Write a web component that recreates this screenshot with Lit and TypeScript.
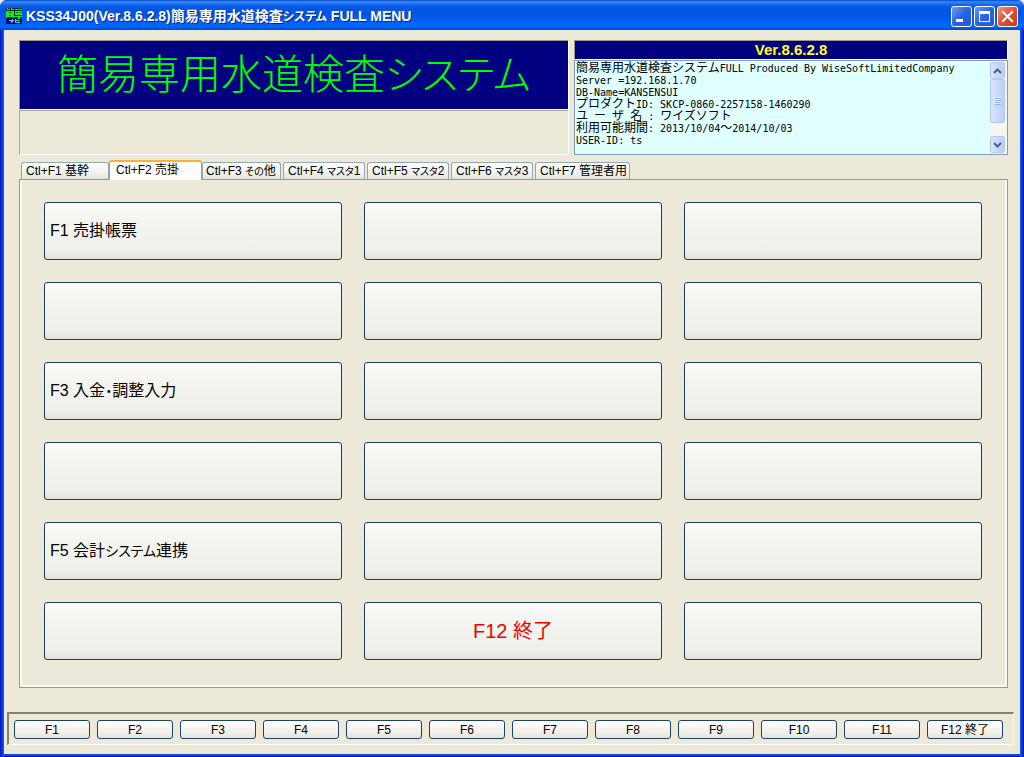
import { LitElement, html, css, svg } from "lit";
import { customElement, state } from "lit/decorators.js";
import { classMap } from "lit/directives/class-map.js";

interface MenuItem {
  label: string;
  exit?: boolean;
}

const TABS = [
  "Ctl+F1 基幹",
  "Ctl+F2 売掛",
  "Ctl+F3 その他",
  "Ctl+F4 マスタ1",
  "Ctl+F5 マスタ2",
  "Ctl+F6 マスタ3",
  "Ctl+F7 管理者用",
];

const MENU: MenuItem[] = Array.from({ length: 18 }, () => ({ label: "" }));
MENU[0] = { label: "F1 売掛帳票" };
MENU[6] = { label: "F3 入金・調整入力" };
MENU[12] = { label: "F5 会計システム連携" };
MENU[16] = { label: "F12 終了", exit: true };

const INFO = [
  "簡易専用水道検査システムFULL Produced By WiseSoftLimitedCompany",
  "Server =192.168.1.70",
  "DB-Name=KANSENSUI",
  "プロダクトID: SKCP-0860-2257158-1460290",
  "ユ ー ザ 名 : ワイズソフト",
  "利用可能期間: 2013/10/04～2014/10/03",
  "USER-ID: ts",
];

const FKEYS = ["F1", "F2", "F3", "F4", "F5", "F6", "F7", "F8", "F9", "F10", "F11", "F12 終了"];

// Kana are set a little smaller than the kanji around them.
const withKana = (text: string) =>
  (text.match(/[\u3041-\u30ff]+|[^\u3041-\u30ff]+/g) ?? []).map((run) =>
    /[\u3041-\u30ff]/.test(run) ? html`<span class="kana">${run}</span>` : run
  );

@customElement("xp-titlebar")
export class XpTitlebar extends LitElement {
  static styles = css`
    :host {
      display: flex;
      align-items: center;
      gap: 4px;
      height: 30px;
      box-sizing: border-box;
      padding: 2px 6px 0;
      border-radius: 7px 7px 0 0;
      background: linear-gradient(
        #0048c8 0,
        #3a8cf4 2px,
        #1a6cf0 4px,
        #0458e4 7px,
        #0054e3 13px,
        #005cf4 20px,
        #0068fe 26px,
        #005cf0 28px,
        #0048d0 30px
      );
    }
    .icon {
      width: 16px;
      height: 16px;
      flex: none;
    }
    h1 {
      flex: 1;
      margin: 0;
      font: bold 14px/20px "Liberation Sans", "Noto Sans CJK JP", sans-serif;
      font-feature-settings: "palt";
      color: #fff;
      text-shadow: 1px 1px 0 #0a2a80;
      white-space: nowrap;
    }
    .kana {
      font-size: 12px;
    }
    .controls {
      display: flex;
      gap: 2px;
    }
    button {
      width: 21px;
      height: 21px;
      padding: 0;
      border: 1px solid #fff;
      border-radius: 3px;
      background: linear-gradient(135deg, #6b9cf8, #2a62e0 50%, #2458d8);
    }
    .close {
      background: linear-gradient(135deg, #f0987c, #e0502a 50%, #c83c14);
    }
    svg {
      display: block;
    }
  `;

  render() {
    return html`
      <svg class="icon" viewBox="0 0 16 16" shape-rendering="crispEdges" aria-hidden="true">
        <rect width="16" height="16" fill="#003018" />
        <rect y="10" width="16" height="6" fill="#000c60" />
        <path d="M1 0h1v1h2v1h1V0h1v1h2v1H1zM0 3h8v7H7V9H1v1H0zM9 1h7v1H9zM9 3h7v4H9zM8 8h8v1h-2v2h-2V9H8z" fill="#18e828" />
        <path d="M3 4h2v1H3zM3 7h2v1H3zM10 4h2v1h-2zM13 4h2v1h-2zM12 0h1v3h-1z" fill="#087018" />
        <path d="M3 12h3v-1h1v1h1v1H7v1H6v1H5v-2H3zM9 11h1v1h3v1h-3v1h4v1H9zM13 10h1v1h-1z" fill="#30d8f0" />
      </svg>
      <h1>${withKana("KSS34J00(Ver.8.6.2.8)簡易専用水道検査システム FULL MENU")}</h1>
      <div class="controls">
        <button aria-label="最小化">
          <svg width="19" height="19"><rect x="4" y="12" width="7" height="3" fill="#fff" /></svg>
        </button>
        <button aria-label="最大化">
          <svg width="19" height="19">
            <path d="M4 4h11v11H4zM5 7v7h9V7z" fill="#fff" fill-rule="evenodd" />
          </svg>
        </button>
        <button class="close" aria-label="閉じる">
          <svg width="19" height="19">
            <path d="M5 5l9 9M14 5l-9 9" stroke="#fff" stroke-width="2" stroke-linecap="square" />
          </svg>
        </button>
      </div>
    `;
  }
}

@customElement("info-pane")
export class InfoPane extends LitElement {
  static styles = css`
    :host {
      display: flex;
      box-sizing: border-box;
      border: 1px solid #7f9db9;
      background: #e0ffff;
      min-width: 0;
    }
    .lines {
      flex: 1;
      min-width: 0;
      overflow: hidden;
      padding: 2px 1px;
      color: #000;
    }
    p {
      margin: 0;
      height: 12px;
      font: 10px/12px "DejaVu Sans Mono", "Noto Sans CJK JP", monospace;
      white-space: pre;
    }
    .wide {
      font: 12px/0 "Liberation Mono", "Noto Sans CJK JP", monospace;
    }
    .scroll {
      width: 16px;
      display: flex;
      flex-direction: column;
      padding: 1px 1px 1px 0;
      background: #f6f5ee;
    }
    .scroll button {
      width: 15px;
      height: 17px;
      padding: 0;
      border: 1px solid #b4c8f4;
      border-radius: 2px;
      background: linear-gradient(90deg, #d8e4fe, #bccdf8);
    }
    .scroll .thumb {
      height: 44px;
      display: grid;
      place-items: center;
    }
    .track {
      flex: 1;
    }
    svg {
      display: block;
      margin: auto;
    }
  `;

  private line(text: string) {
    const runs = text.match(/[\x20-\x7e]+|[^\x20-\x7e]+/g) ?? [];
    return html`<p>${runs.map((r) => (r.charCodeAt(0) < 127 ? r : html`<span class="wide">${r}</span>`))}</p>`;
  }

  render() {
    return html`
      <div class="lines" tabindex="0" role="document" aria-label="システム情報">${INFO.map((l) => this.line(l))}</div>
      <div class="scroll">
        <button aria-label="上へ">
          <svg width="9" height="6"><path d="M1 5l3.500-3.500L8 5" fill="none" stroke="#4d6185" stroke-width="2" /></svg>
        </button>
        <button class="thumb" aria-label="スクロール">
          <svg width="7" height="8" shape-rendering="crispEdges">
            ${[0, 2, 4, 6].map((y) => svg`<rect y=${y} width="7" height="1" fill="#eef4fe" />
              <rect x="1" y=${y + 1} width="6" height="1" fill="#8cb0f8" />`)}
          </svg>
        </button>
        <div class="track"></div>
        <button aria-label="下へ">
          <svg width="9" height="6"><path d="M1 1l3.500 3.500L8 1" fill="none" stroke="#4d6185" stroke-width="2" /></svg>
        </button>
      </div>
    `;
  }
}

@customElement("app-root")
export class AppRoot extends LitElement {
  @state() private active = 1;

  static styles = css`
    :host {
      display: block;
      background: #e4ecf8;
      font-family: "Liberation Sans", "Noto Sans CJK JP", sans-serif;
      font-feature-settings: "palt";
      color: #000;
    }
    .window {
      display: flex;
      flex-direction: column;
      min-height: 100vh;
      box-sizing: border-box;
      border-radius: 7px 7px 0 0;
      background: #0831d9;
    }
    .frame {
      flex: 1;
      display: flex;
      padding: 0 4px 4px;
      background: linear-gradient(90deg, #0019c8 0, #0831d9 2px, #1668f4 4px, #1668f4 calc(100% - 4px), #0831d9 calc(100% - 2px), #0019a0 100%);
    }
    .client {
      flex: 1;
      min-width: 0;
      display: flex;
      flex-direction: column;
      background: #ece9d8;
      padding: 10px 0 9px;
      box-shadow: 0 2px 0 #1048d8, 0 4px 0 #0019a0;
    }
    .body {
      flex: 1;
      display: flex;
      flex-direction: column;
      padding: 0 12px 0 15px;
    }
    .header {
      display: grid;
      grid-template-columns: 550fr 434fr;
      gap: 5px;
    }
    .brand,
    .status {
      display: flex;
      flex-direction: column;
      min-width: 0;
    }
    .banner {
      height: 70px;
      box-sizing: border-box;
      margin: 0;
      padding-left: 37px;
      border: 1px solid;
      border-color: #9d9a8c #fff #fff #9d9a8c;
      background: #000080;
      color: #00ff00;
      font-size: 41px;
      line-height: 68px;
      font-weight: 300;
      white-space: nowrap;
    }
    .banner .kana {
      font-size: 40px;
    }
    .message {
      height: 45px;
      box-sizing: border-box;
      border: 1px solid;
      border-color: #aca899 #fff #fff #aca899;
    }
    .version {
      height: 20px;
      box-sizing: border-box;
      border: 1px solid;
      border-color: #9d9a8c #fff #fff #9d9a8c;
      background: #000080;
      color: #ffff20;
      font-size: 15px;
      line-height: 18px;
      font-weight: bold;
      text-align: center;
    }
    info-pane {
      height: 95px;
    }
    .tabs {
      display: flex;
      align-items: flex-end;
      height: 19px;
      margin-top: 5px;
      padding-left: 2px;
    }
    .tab {
      height: 17px;
      box-sizing: border-box;
      margin: 0 2px 0 0;
      padding: 0 4px;
      width: 82px;
      border: 1px solid #91a7b4;
      border-bottom: 0;
      border-radius: 3px 3px 0 0;
      background: linear-gradient(#fff, #f0f0ea 70%, #e2e2dc);
      font: 12px/16px "Liberation Sans", "Noto Sans CJK JP", sans-serif;
      font-feature-settings: "palt";
      text-align: left;
      white-space: nowrap;
      color: #000;
    }
    .tab .kana {
      font-size: 10px;
    }
    .tab:nth-child(1) {
      width: 88px;
      margin-right: 0;
    }
    .tab:nth-child(2) {
      width: 93px;
      margin-right: 0;
    }
    .tab:nth-child(3) {
      width: 79px;
      padding: 0 3px;
    }
    .tab:nth-child(7) {
      width: 95px;
    }
    .tab.active {
      z-index: 1;
      height: 20px;
      margin-bottom: -1px;
      padding: 0 6px 2px;
      border-top: 2px solid #f8b038;
      background: #fdfdfb;
    }
    .panel {
      flex: 1;
      display: grid;
      grid-template-columns: repeat(3, 1fr);
      grid-auto-rows: 58px;
      align-content: start;
      gap: 22px;
      padding: 22px 25px 27px 24px;
      border: 1px solid #919b9c;
      box-shadow: inset 2px 0 0 #f8f7f0, inset -2px -2px 0 #fbfaf4;
    }
    .item {
      min-width: 0;
      padding: 0 5px;
      border: 1px solid #1c4058;
      border-radius: 3px;
      background: linear-gradient(#fdfdfc, #f4f4f0 30%, #f0f0ea 85%, #dfe2dc);
      font: 16px/20px "Liberation Sans", "Noto Sans CJK JP", sans-serif;
      font-feature-settings: "palt";
      text-align: left;
      color: #000;
    }
    .item .kana {
      font-size: 14px;
    }
    .item.exit {
      font-size: 20px;
      text-align: center;
      color: #f00000;
    }
    .keys {
      display: grid;
      grid-template-columns: repeat(12, 1fr);
      gap: 7px;
      margin: 24px 6px 0 3px;
      padding: 6px 10px 5px 5px;
      border: 1px solid;
      border-width: 2px 1px 1px 2px;
      border-color: #858272 #fff #fff #858272;
    }
    .key {
      min-width: 0;
      height: 19px;
      padding: 0;
      border: 1px solid #1c4068;
      border-radius: 3px;
      background: linear-gradient(#fff, #f2f1ea 60%, #e4e4dc);
      font: 12px/16px "Liberation Sans", "Noto Sans CJK JP", sans-serif;
      color: #000;
      white-space: nowrap;
    }
  `;

  render() {
    return html`
      <div class="window">
        <xp-titlebar></xp-titlebar>
        <div class="frame">
          <main class="client">
            <div class="body">
              <header class="header">
                <div class="brand">
                  <h2 class="banner">${withKana("簡易専用水道検査システム")}</h2>
                  <div class="message"></div>
                </div>
                <div class="status">
                  <div class="version">Ver.8.6.2.8</div>
                  <info-pane></info-pane>
                </div>
              </header>
              <div class="tabs" role="tablist">
                ${TABS.map(
                  (t, i) => html`<button
                    role="tab"
                    aria-selected=${i === this.active}
                    class=${classMap({ tab: true, active: i === this.active })}
                    @click=${() => (this.active = i)}
                  >${withKana(t)}</button>`
                )}
              </div>
              <section class="panel" role="tabpanel">
                ${MENU.map(
                  (m) => html`<button class=${classMap({ item: true, exit: !!m.exit })}>${withKana(m.label)}</button>`
                )}
              </section>
            </div>
            <footer class="keys">${FKEYS.map((k) => html`<button class="key">${k}</button>`)}</footer>
          </main>
        </div>
      </div>
    `;
  }
}
